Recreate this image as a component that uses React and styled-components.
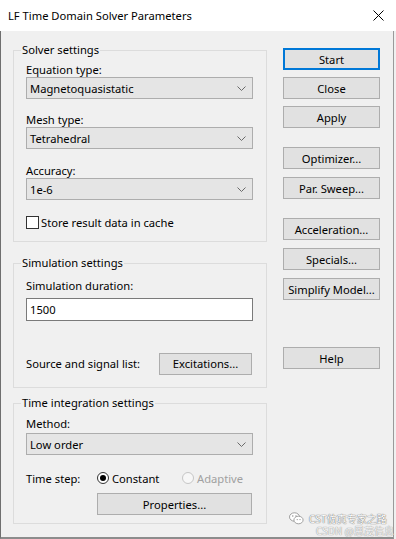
import React from 'react';
import styled, { createGlobalStyle } from 'styled-components';

const Global = createGlobalStyle`
  html, body { margin: 0; padding: 0; background: #f0f0f0; }
  body {
    width: 396px; height: 539px; overflow: hidden;
    font-family: "Noto Sans", "Liberation Sans", sans-serif;
    color: #000;
  }
`;

const Window = styled.div`
  position: relative;
  width: 396px;
  height: 539px;
  display: flex;
  flex-direction: column;
  background: #f0f0f0;
`;

const TitleBar = styled.div`
  flex: none;
  height: 31px;
  background: #fff;
  display: flex;
  align-items: center;
  justify-content: space-between;
  padding-left: 8px;
  font-size: 11.2px;
`;

const CloseBox = styled.div`
  width: 35px;
  height: 31px;
  display: flex;
  align-items: center;
  justify-content: center;
`;

const Body = styled.div`
  flex: 1;
  display: flex;
  align-items: flex-start;
  padding: 12px 0 0 12px;
  border-left: 1px solid #6f6f6f;
  border-right: 1px solid #9a9a9a;
  border-bottom: 2px solid #8c8c8c;
  margin-right: 2px;
  font-size: 11.2px;
`;

const LeftColumn = styled.div`
  width: 254px;
  display: flex;
  flex-direction: column;
`;

const RightColumn = styled.div`
  width: 97px;
  margin-left: 16px;
  padding-top: 5px;
  display: flex;
  flex-direction: column;
`;

const Group = styled.fieldset`
  margin: ${p => p.$mt || 0}px 0 0 0;
  padding: 0 13px ${p => p.$pb || 12}px 12px;
  border: 1px solid #dcdcdc;
  min-width: 0;
  display: flex;
  flex-direction: column;
`;

const Legend = styled.legend`
  padding: 0 1px;
  margin-left: -5px;
  line-height: 14px;
`;

const Label = styled.div`
  line-height: 15px;
  margin-top: ${p => p.$mt || 0}px;
`;

const Combo = styled.div`
  box-sizing: border-box;
  height: 22px;
  margin-top: ${p => p.$mt || 0}px;
  background: #e5e5e5;
  border: 1px solid #adadad;
  display: flex;
  align-items: center;
  justify-content: space-between;
  padding: 0 6px 0 3px;
`;

const TextBox = styled.div`
  box-sizing: border-box;
  height: 23px;
  margin-top: ${p => p.$mt || 0}px;
  background: #fff;
  border: 1px solid #7a7a7a;
  display: flex;
  align-items: center;
  padding-left: 3px;
`;

const CheckRow = styled.label`
  display: flex;
  align-items: center;
  height: 15px;
  margin-top: ${p => p.$mt || 0}px;
  gap: 2px;
`;

const CheckBox = styled.span`
  box-sizing: border-box;
  width: 13px;
  height: 13px;
  border: 1px solid #333;
  background: #fff;
`;

const Row = styled.div`
  display: flex;
  align-items: center;
  height: ${p => p.$h || 23}px;
  margin-top: ${p => p.$mt || 0}px;
`;

const RowLabel = styled.span`
  width: ${p => p.$w}px;
  flex: none;
`;

const RadioOption = styled.span`
  display: flex;
  align-items: center;
  gap: 3px;
  width: ${p => p.$w ? `${p.$w}px` : 'auto'};
  color: ${p => p.$disabled ? '#a0a0a0' : '#000'};
`;

const RadioCircle = styled.span`
  box-sizing: border-box;
  width: 12px;
  height: 12px;
  border-radius: 50%;
  border: 1px solid ${p => p.$disabled ? '#c6c6c6' : '#333'};
  background: ${p => p.$disabled ? '#f7f7f7' : '#fff'};
  display: flex;
  align-items: center;
  justify-content: center;
  &::after {
    content: '';
    display: ${p => p.$checked ? 'block' : 'none'};
    width: 6px;
    height: 6px;
    border-radius: 50%;
    background: #000;
  }
`;

const Button = styled.div`
  box-sizing: border-box;
  height: 22px;
  width: ${p => p.$w ? `${p.$w}px` : '100%'};
  margin-top: ${p => p.$mt || 0}px;
  margin-left: ${p => p.$ml || 0}px;
  background: #e1e1e1;
  border: 1px solid ${p => p.$default ? '#0078d7' : '#adadad'};
  box-shadow: ${p => p.$default ? 'inset 0 0 0 1px #0078d7' : 'none'};
  display: flex;
  align-items: center;
  justify-content: center;
  flex: none;
`;

const Watermark = styled.div`
  position: absolute;
  left: 289px;
  top: 512px;
  font-family: "Noto Sans CJK SC", "Noto Sans", sans-serif;
  pointer-events: none;
`;

const WmLine = styled.div`
  display: flex;
  align-items: center;
  gap: 5px;
  font-size: 10px;
  line-height: 11px;
  height: ${p => p.$h || 11}px;
  white-space: nowrap;
  margin-left: ${p => p.$ml || 0}px;
  color: ${p => p.$faint ? '#f4f4f4' : '#fff'};
  text-shadow: 0 0 1px ${p => p.$faint ? '#9a9a9a' : '#6a6a6a'}, 0 0 1px ${p => p.$faint ? '#9a9a9a' : '#6a6a6a'};
`;

const Chevron = () => (
  <svg width="9" height="5" viewBox="0 0 9 5">
    <path d="M0.5 0.5 L4.5 4.5 L8.5 0.5" fill="none" stroke="#6a6a6a" strokeWidth="1" />
  </svg>
);

const CloseIcon = () => (
  <svg width="11" height="11" viewBox="0 0 11 11">
    <path d="M0.5 0.5 L10.5 10.5 M10.5 0.5 L0.5 10.5" stroke="#000" strokeWidth="1" />
  </svg>
);

const WeChat = () => (
  <svg width="15" height="13" viewBox="0 0 15 13">
    <ellipse cx="5.5" cy="5" rx="5" ry="4.2" fill="#fff" stroke="#8a8a8a" strokeWidth="0.8" />
    <ellipse cx="9.5" cy="8" rx="4.6" ry="3.8" fill="#fff" stroke="#8a8a8a" strokeWidth="0.8" />
    <circle cx="3.8" cy="4" r="0.7" fill="#8a8a8a" />
    <circle cx="7" cy="4" r="0.7" fill="#8a8a8a" />
    <circle cx="8.2" cy="7.6" r="0.6" fill="#8a8a8a" />
    <circle cx="11" cy="7.6" r="0.6" fill="#8a8a8a" />
  </svg>
);

const ComboBox = ({ value, mt }) => (
  <Combo $mt={mt}>
    <span>{value}</span>
    <Chevron />
  </Combo>
);

export default function App() {
  return (
    <>
      <Global />
      <Window>
        <TitleBar>
          <span>LF Time Domain Solver Parameters</span>
          <CloseBox><CloseIcon /></CloseBox>
        </TitleBar>
        <Body>
          <LeftColumn>
            <Group $pb={11}>
              <Legend>Solver settings</Legend>
              <Label $mt={5}>Equation type:</Label>
              <ComboBox value="Magnetoquasistatic" />
              <Label $mt={13}>Mesh type:</Label>
              <ComboBox value="Tetrahedral" />
              <Label $mt={14}>Accuracy:</Label>
              <ComboBox value="1e-6" />
              <CheckRow $mt={15}>
                <CheckBox />
                <span>Store result data in cache</span>
              </CheckRow>
            </Group>

            <Group $mt={14} $pb={12}>
              <Legend>Simulation settings</Legend>
              <Label $mt={8}>Simulation duration:</Label>
              <TextBox $mt={5}>1500</TextBox>
              <Row $mt={31}>
                <RowLabel $w={133}>Source and signal list:</RowLabel>
                <Button $w={93}>Excitations...</Button>
              </Row>
            </Group>

            <Group $mt={8} $pb={8}>
              <Legend>Time integration settings</Legend>
              <Label $mt={6}>Method:</Label>
              <ComboBox value="Low order" mt={2} />
              <Row $mt={15} $h={16}>
                <RowLabel $w={71}>Time step:</RowLabel>
                <RadioOption $w={85}>
                  <RadioCircle $checked />
                  Constant
                </RadioOption>
                <RadioOption $disabled>
                  <RadioCircle $disabled />
                  Adaptive
                </RadioOption>
              </Row>
              <Button $w={155} $ml={71} $mt={7}>Properties...</Button>
            </Group>
          </LeftColumn>

          <RightColumn>
            <Button $default>Start</Button>
            <Button $mt={7}>Close</Button>
            <Button $mt={7}>Apply</Button>
            <Button $mt={19}>Optimizer...</Button>
            <Button $mt={8}>Par. Sweep...</Button>
            <Button $mt={19}>Acceleration...</Button>
            <Button $mt={8}>Specials...</Button>
            <Button $mt={8}>Simplify Model...</Button>
            <Button $mt={47}>Help</Button>
          </RightColumn>
        </Body>

        <Watermark>
          <WmLine $h={13}>
            <WeChat />
            <span>CST仿真专家之路</span>
          </WmLine>
          <WmLine $ml={27} $faint>CSDN @思茂信息</WmLine>
        </Watermark>
      </Window>
    </>
  );
}
